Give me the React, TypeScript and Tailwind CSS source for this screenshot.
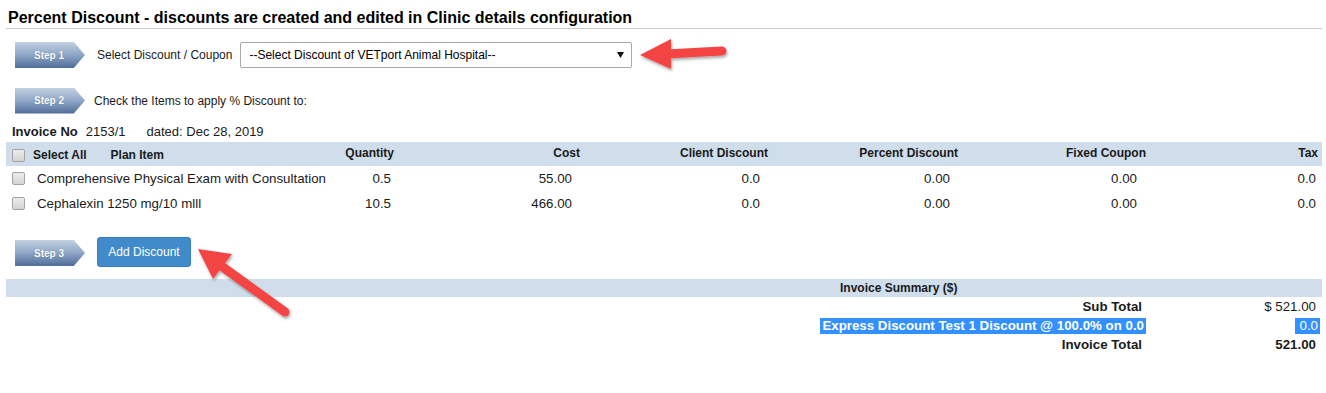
import React from 'react';

const StepBadge: React.FC<{ label: string; className?: string }> = ({ label, className }) => (
  <div
    className={`w-[70px] h-[26px] shrink-0 flex items-center pl-[19px] bg-linear-to-b from-[#c3d1e2] via-[#8ea6c6] to-[#4f6d98] [clip-path:polygon(0_0,84%_0,100%_50%,84%_100%,0_100%)] ${className ?? ''}`}
  >
    <span className="text-[10px] font-bold text-white [text-shadow:0_0_1px_rgba(40,60,90,0.6)]">{label}</span>
  </div>
);

const Check: React.FC = () => (
  <span className="inline-block w-[13px] h-[13px] shrink-0 rounded-[2px] border border-[#a3a3a3] bg-linear-to-b from-[#ececec] to-[#d4d4d4]" />
);

const rows = [
  { item: 'Comprehensive Physical Exam with Consultation', qty: '0.5', cost: '55.00', client: '0.0', pct: '0.00', fixed: '0.00', tax: '0.0' },
  { item: 'Cephalexin 1250 mg/10 mlll', qty: '10.5', cost: '466.00', client: '0.0', pct: '0.00', fixed: '0.00', tax: '0.0' },
];

const cols = 'grid grid-cols-[324px_66px_186px_188px_190px_188px_172px]';

const App: React.FC = () => {
  return (
    <div className="relative w-[1326px] h-[393px] overflow-hidden bg-white text-[#1a1a1a] font-['Liberation_Sans',Arial,sans-serif]">
      {/* title */}
      <div className="ml-[6px] mr-[4px] pt-[9px] pb-[1px] border-b border-[#c9c9c9]">
        <h1 className="pl-[2px] text-[16px] leading-[18px] font-bold text-black">
          Percent Discount - discounts are created and edited in Clinic details configuration
        </h1>
      </div>

      {/* step 1 */}
      <div className="mt-[13px] h-[26px] pl-[15px] flex items-center">
        <StepBadge label="Step 1" />
        <span className="ml-[12px] text-[12px]">Select Discount / Coupon</span>
        <div className="ml-[8px] w-[392px] h-[26px] border border-[#a9a9a9] rounded-[2px] flex items-center justify-between pl-[8px] pr-[7px] text-[12px] text-black">
          <span>--Select Discount of VETport Animal Hospital--</span>
          <svg width="7" height="6" viewBox="0 0 7 6"><path d="M0 0h7L3.5 6z" fill="#111" /></svg>
        </div>
      </div>

      {/* step 2 */}
      <div className="mt-[20px] h-[25px] pl-[15px] flex items-center">
        <StepBadge label="Step 2" className="h-[25px]" />
        <span className="ml-[9px] text-[12px]">Check the Items to apply % Discount to:</span>
      </div>

      {/* invoice line */}
      <div className="mt-[11px] pl-[12px] h-[16px] flex items-center text-[13px]">
        <span className="font-bold">Invoice No</span>
        <span className="ml-[8px]">2153/1</span>
        <span className="ml-[21px]">dated: Dec 28, 2019</span>
      </div>

      {/* table */}
      <div className="mt-[2px] ml-[6px] w-[1316px]">
        <div className={`${cols} h-[24px] bg-[#cfdeea] text-[12px] font-bold items-center`}>
          <div className="pl-[6px] flex items-center pt-[2px]">
            <Check />
            <span className="ml-[8px]">Select All</span>
            <span className="ml-[24px]">Plan Item</span>
          </div>
          <div className="text-right pr-[2px] -ml-[20px] pb-[3px]">Quantity</div>
          <div className="text-right pr-[2px] pb-[3px]">Cost</div>
          <div className="text-right pr-[2px] pb-[3px]">Client Discount</div>
          <div className="text-right pr-[2px] pb-[3px]">Percent Discount</div>
          <div className="text-right pr-[2px] pb-[3px]">Fixed Coupon</div>
          <div className="text-right pr-[2px] pb-[3px]">Tax</div>
        </div>
        {rows.map((r) => (
          <div key={r.item} className={`${cols} h-[25px] text-[13.3px] items-center`}>
            <div className="pl-[6px] flex items-center">
              <Check />
              <span className="ml-[12px]">{r.item}</span>
            </div>
            <div className="text-right pr-[5px]">{r.qty}</div>
            <div className="text-right pr-[10px]">{r.cost}</div>
            <div className="text-right pr-[10px]">{r.client}</div>
            <div className="text-right pr-[10px]">{r.pct}</div>
            <div className="text-right pr-[11px]">{r.fixed}</div>
            <div className="text-right pr-[4px]">{r.tax}</div>
          </div>
        ))}
      </div>

      {/* step 3 */}
      <div className="mt-[21px] h-[30px] pl-[15px] flex items-center">
        <StepBadge label="Step 3" className="mt-[2px]" />
        <button className="ml-[12px] w-[94px] h-[30px] rounded-[3px] bg-[#428bca] border border-[#357ebd] text-white text-[12px]">
          Add Discount
        </button>
      </div>

      {/* invoice summary */}
      <div className="mt-[12px] ml-[6px] w-[1316px] h-[18px] bg-[#cfdeea] flex items-center pl-[834px] text-[12px] font-bold">
        Invoice Summary ($)
      </div>
      <div className="grid grid-cols-[1146px_174px] text-[13.3px]">
        <div className="h-[19px] flex items-center justify-end pr-[4px] font-bold">Sub Total</div>
        <div className="h-[19px] flex items-center justify-end pr-[4px]">$ 521.00</div>
        <div className="h-[19px] flex items-center justify-end">
          <span className="bg-[#3390ff] text-white font-bold leading-[16px] pl-[2px] pr-[2px]">
            Express Discount Test 1 Discount @ 100.0% on 0.0
          </span>
        </div>
        <div className="h-[19px] flex items-center justify-end">
          <span className="bg-[#3390ff] text-white leading-[16px] pl-[5px] pr-[2px]">0.0</span>
        </div>
        <div className="h-[19px] flex items-center justify-end pr-[4px] font-bold">Invoice Total</div>
        <div className="h-[19px] flex items-center justify-end pr-[4px] font-bold">521.00</div>
      </div>

      {/* annotation arrows */}
      <svg className="absolute inset-0 pointer-events-none" width="1326" height="393">
        <defs>
          <filter id="sh" x="-20%" y="-20%" width="140%" height="140%">
            <feDropShadow dx="1" dy="2" stdDeviation="1.5" floodColor="#000" floodOpacity="0.35" />
          </filter>
        </defs>
        <g filter="url(#sh)" fill="#f44444" stroke="#f44444">
          <line x1="666" y1="54" x2="722" y2="51" strokeWidth="9" strokeLinecap="round" />
          <polygon points="640,55 671,39 671,69" stroke="none" />
          <line x1="220" y1="265" x2="285" y2="312" strokeWidth="9" strokeLinecap="round" />
          <polygon points="198,249 232,254 213,279" stroke="none" />
        </g>
      </svg>
    </div>
  );
};

export default App;
